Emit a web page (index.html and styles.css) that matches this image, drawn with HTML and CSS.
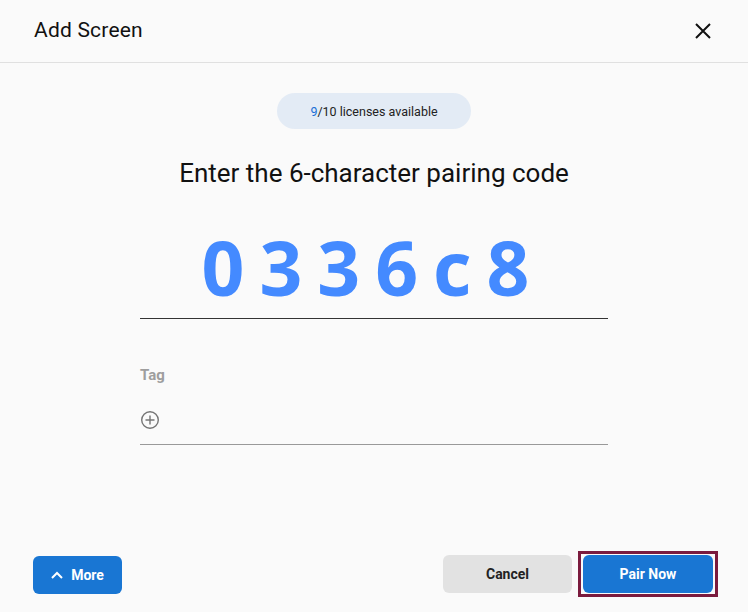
FILE: index.html
```html
<!DOCTYPE html>
<html>
<head>
<meta charset="utf-8">
<link rel="stylesheet" href="styles.css">
</head>
<body>
<div class="dialog">
  <header class="header">
    <h1 class="title">Add Screen</h1>
    <button class="close" aria-label="Close">
      <svg width="16" height="16" viewBox="0 0 16 16"><path d="M1 1L15 15M15 1L1 15" stroke="#111" stroke-width="2" fill="none"/></svg>
    </button>
  </header>
  <main class="body">
    <div class="pill"><span class="avail">9</span>/10 licenses available</div>
    <h2 class="heading">Enter the 6-character pairing code</h2>
    <div class="code-field">
      <div class="code">0336c8</div>
    </div>
    <div class="tag-field">
      <div class="tag-label">Tag</div>
      <div class="tag-input">
        <svg width="20" height="20" viewBox="0 0 20 20"><circle cx="10" cy="10" r="8.3" stroke="#757575" stroke-width="1.4" fill="none"/><path d="M10 5.5V14.5M5.5 10H14.5" stroke="#757575" stroke-width="1.4"/></svg>
      </div>
    </div>
  </main>
  <footer class="footer">
    <button class="btn btn-primary more">
      <svg width="12" height="8" viewBox="0 0 12 8"><path d="M1 7L6 2L11 7" stroke="#fff" stroke-width="2" fill="none"/></svg>
      More
    </button>
    <div class="actions">
      <button class="btn btn-gray cancel">Cancel</button>
      <div class="focus-ring"><button class="btn btn-primary pair">Pair Now</button></div>
    </div>
  </footer>
</div>
</body>
</html>
```
FILE: styles.css
```css
* { box-sizing: border-box; }
html, body { margin: 0; padding: 0; }
body {
  width: 748px;
  height: 612px;
  background: #fafafa;
  font-family: Roboto, "Noto Sans", sans-serif;
  color: #111;
  overflow: hidden;
}
.dialog {
  display: flex;
  flex-direction: column;
  height: 612px;
}
.header {
  height: 63px;
  border-bottom: 1px solid #e0e0e0;
  display: flex;
  align-items: center;
  justify-content: space-between;
  padding: 0 37px 0 34px;
}
.title {
  margin: 0;
  font-size: 21px;
  font-weight: 400;
  letter-spacing: 0.2px;
  color: #111;
  padding-bottom: 3px;
}
.close {
  background: none;
  border: 0;
  padding: 0;
  width: 16px;
  height: 16px;
  display: flex;
}
.body {
  flex: 1;
  display: flex;
  flex-direction: column;
  align-items: center;
  padding-top: 30px;
}
.pill {
  width: 194px;
  height: 36px;
  border-radius: 18px;
  background: #e3ebf5;
  display: flex;
  align-items: center;
  justify-content: center;
  font-size: 12.5px;
  color: #222;
}
.avail { color: #1a6fd6; }
.heading {
  margin: 27px 0 0;
  font-size: 26px;
  font-weight: 400;
  letter-spacing: 0;
  color: #111;
  line-height: 34px;
}
.code-field {
  width: 468px;
  margin-top: 32px;
  border-bottom: 1px solid #333;
  display: flex;
  justify-content: center;
  height: 97px;
}
.code {
  font-family: "Open Sans", sans-serif;
  font-weight: 700;
  font-size: 75px;
  line-height: 90px;
  letter-spacing: 15px;
  color: #448aff;
  padding-right: 2px;
}
.tag-field {
  width: 468px;
  margin-top: 47px;
}
.tag-label {
  font-size: 15px;
  font-weight: 700;
  color: #9e9e9e;
  line-height: 18px;
}
.tag-input {
  margin-top: 24px;
  height: 37px;
  border-bottom: 1px solid #999;
  display: flex;
  align-items: flex-start;
  padding-top: 2px;
}
.footer {
  display: flex;
  justify-content: space-between;
  align-items: center;
  padding: 0 30px 15px 33px;
}
.btn {
  border: 0;
  border-radius: 6px;
  height: 38px;
  font-family: Roboto, "Noto Sans", sans-serif;
  font-size: 14px;
  font-weight: 700;
  display: flex;
  align-items: center;
  justify-content: center;
}
.btn-primary { background: #1976d3; color: #fff; }
.btn-gray { background: #e2e2e2; color: #222; }
.more {
  width: 89px;
  gap: 8px;
  margin-top: 1px;
}
.actions {
  display: flex;
  align-items: center;
  gap: 6px;
}
.cancel { width: 129px; }
.focus-ring {
  border: 3px solid #7b1b3e;
  padding: 1px 2px;
  display: flex;
}
.pair { width: 130px; }
```
